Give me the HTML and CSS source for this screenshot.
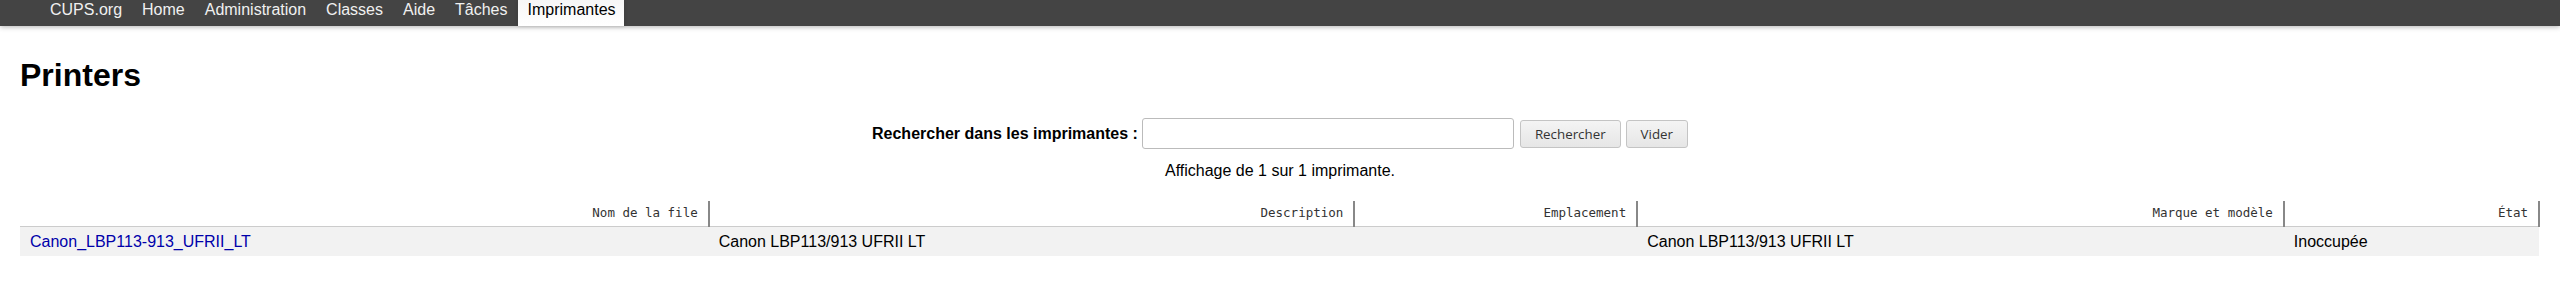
FILE: index.html
```html
<!DOCTYPE html>
<html lang="fr">
<head>
  <meta charset="UTF-8" />
  <title>Imprimantes - CUPS</title>
  <link rel="stylesheet" href="styles.css">
</head>
<body>
  <!-- Barre de navigation -->
  <header class="cups-header">
    <ul>
      <li><a href="#">CUPS.org</a></li>
      <li><a href="#">Home</a></li>
      <li><a href="#">Administration</a></li>
      <li><a href="#">Classes</a></li>
      <li><a href="#">Aide</a></li>
      <li><a href="#">Tâches</a></li>
      <li class="active"><a href="#">Imprimantes</a></li>
    </ul>
  </header>

  <main class="cups-body">
    <h1>Printers</h1>

    <!-- Recherche -->
    <form class="search-form">
      <label for="query">Rechercher dans les imprimantes :</label>
      <input type="search" id="query" class="search-input">
      <button type="button" class="btn">Rechercher</button>
      <button type="button" class="btn">Vider</button>
    </form>

    <p class="count">Affichage de 1 sur 1 imprimante.</p>

    <!-- Liste des imprimantes -->
    <table class="list">
      <colgroup>
        <col class="col-name">
        <col class="col-desc">
        <col class="col-loc">
        <col class="col-model">
        <col class="col-state">
      </colgroup>
      <thead>
        <tr>
          <th>Nom de la file</th>
          <th>Description</th>
          <th>Emplacement</th>
          <th>Marque et modèle</th>
          <th>État</th>
        </tr>
      </thead>
      <tbody>
        <tr>
          <td><a href="#">Canon_LBP113-913_UFRII_LT</a></td>
          <td>Canon LBP113/913 UFRII LT</td>
          <td></td>
          <td>Canon LBP113/913 UFRII LT</td>
          <td>Inoccupée</td>
        </tr>
      </tbody>
    </table>
  </main>
</body>
</html>
```

FILE: styles.css
```css
* {
  margin: 0;
  padding: 0;
  box-sizing: border-box;
}

body {
  font-family: 'Liberation Sans', Arial, sans-serif;
  font-size: 16px;
  color: #000;
  background: #fff;
}

/* Navigation */
.cups-header {
  background: #444;
  box-shadow: 0 1px 5px rgba(0,0,0,0.3);
  padding-left: 40px;
}

.cups-header ul {
  display: flex;
  list-style: none;
}

.cups-header a {
  display: block;
  padding: 1px 10px 7px;
  line-height: 18px;
  color: #f0f0f0;
  text-decoration: none;
}

.cups-header .active a {
  background: linear-gradient(#f6f6f6, #fff);
  color: #000;
  padding: 1px 8px 7px 10px;
  box-shadow: 0 0 4px rgba(0,0,0,0.15);
}

/* Contenu */
.cups-body {
  padding: 0 20px;
}

h1 {
  font-size: 32px;
  line-height: 37px;
  font-weight: bold;
  margin-top: 31px;
}

.search-form {
  display: flex;
  justify-content: center;
  align-items: center;
  margin-top: 23px;
  height: 33px;
}

.search-form label {
  font-weight: bold;
  margin-right: 4px;
}

.search-input {
  width: 372px;
  height: 31px;
  border: 1px solid #bbb;
  border-radius: 3px;
  background: #fff;
}

.btn {
  font-family: 'Open Sans', sans-serif;
  font-size: 13.33px;
  height: 28px;
  padding: 0 14px;
  margin-left: 5px;
  color: #333;
  background: linear-gradient(#f4f4f4, #e6e6e6);
  border: 1px solid #c4c4c4;
  border-radius: 3px;
}

.search-input + .btn {
  margin-left: 6px;
}

.count {
  text-align: center;
  line-height: 18px;
  margin-top: 12px;
}

/* Tableau */
.list {
  width: 100%;
  border-collapse: collapse;
  table-layout: fixed;
  margin-top: 21px;
}

.col-name  { width: 27.34%; }
.col-desc  { width: 25.63%; }
.col-loc   { width: 11.23%; }
.col-model { width: 25.67%; }
.col-state { width: 10.13%; }

.list th {
  font-family: 'DejaVu Sans Mono', monospace;
  font-size: 12.5px;
  font-weight: normal;
  line-height: 14px;
  color: #333;
  text-align: right;
  padding: 5px 10px 6px;
  border-right: 2px solid #888;
  border-bottom: 1px solid #ccc;
}

.list td {
  background: #f2f2f2;
  line-height: 19px;
  padding: 5px 10px;
  text-align: left;
}

.list td a {
  color: #0000aa;
  text-decoration: none;
}
```
